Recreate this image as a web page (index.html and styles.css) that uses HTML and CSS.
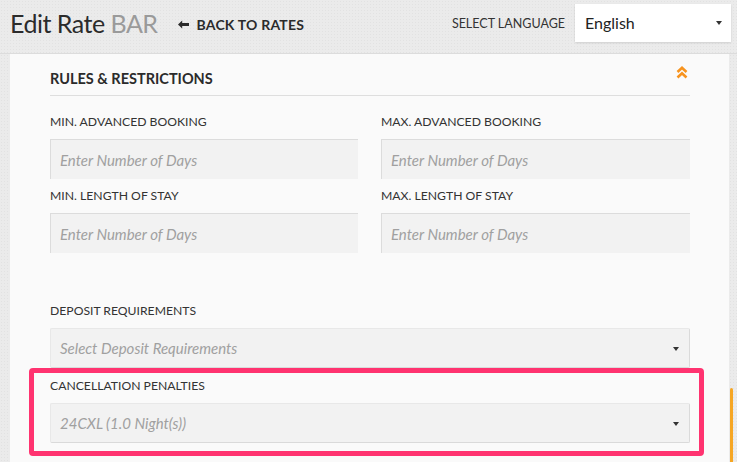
FILE: index.html
```html
<!DOCTYPE html>
<html lang="en">
<head>
<meta charset="utf-8">
<title>Edit Rate BAR</title>
<link rel="stylesheet" href="styles.css">
</head>
<body>
<div class="page">
  <header class="topbar">
    <h1 class="title">Edit Rate <span class="title-sub">BAR</span></h1>
    <a class="back" href="#"><svg class="back-arrow" width="11" height="9" viewBox="0 0 11 9"><path d="M0 4.5 L4.2 0.6 L4.2 3.1 L11 3.1 L11 5.9 L4.2 5.9 L4.2 8.4 Z" fill="#2b2b2b"/></svg>BACK TO RATES</a>
    <div class="lang">
      <span class="lang-label">SELECT LANGUAGE</span>
      <div class="lang-select"><span>English</span><span class="caret"></span></div>
    </div>
  </header>
  <main class="panel">
    <div class="section-head">
      <h2 class="section-title">RULES &amp; RESTRICTIONS</h2>
      <svg class="chev" width="12" height="13" viewBox="0 0 12 13"><path d="M1.5 6 L6 1.8 L10.5 6 M1.5 11.5 L6 7.3 L10.5 11.5" fill="none" stroke="#f7931e" stroke-width="2.6"/></svg>
    </div>
    <div class="grid">
      <div class="field">
        <label class="label">MIN. ADVANCED BOOKING</label>
        <div class="input">Enter Number of Days</div>
      </div>
      <div class="field">
        <label class="label">MAX. ADVANCED BOOKING</label>
        <div class="input">Enter Number of Days</div>
      </div>
      <div class="field">
        <label class="label">MIN. LENGTH OF STAY</label>
        <div class="input">Enter Number of Days</div>
      </div>
      <div class="field">
        <label class="label">MAX. LENGTH OF STAY</label>
        <div class="input">Enter Number of Days</div>
      </div>
    </div>
    <div class="field field-deposit">
      <label class="label">DEPOSIT REQUIREMENTS</label>
      <div class="input select">Select Deposit Requirements<span class="caret"></span></div>
    </div>
    <div class="highlight">
      <div class="field">
        <label class="label">CANCELLATION PENALTIES</label>
        <div class="input select">24CXL (1.0 Night(s))<span class="caret"></span></div>
      </div>
    </div>
  </main>
  <div class="scrollbar"></div>
</div>
</body>
</html>
```
FILE: styles.css
```css
* { box-sizing: border-box; }
html, body { margin: 0; padding: 0; }
body {
  width: 737px;
  height: 462px;
  overflow: hidden;
  font-family: Lato, "Open Sans", "Liberation Sans", sans-serif;
  color: #333;
  background-color: #ebebeb;
  background-image: radial-gradient(#e2e2e2 0.6px, transparent 0.8px);
  background-size: 3px 3px;
}
.page { position: relative; height: 462px; }
.topbar {
  height: 54px;
  display: flex;
  align-items: center;
  padding: 0 6px 5px 10px;
  border-bottom: 1px solid #dcdcdc;
}
.title {
  margin: -2px 0 0;
  font-weight: 400;
  font-size: 25px;
  color: #2b2b2b;
  letter-spacing: -0.5px;
}
.title-sub { color: #9a9a9a; }
.back {
  margin-left: 20px;
  font-size: 14px;
  font-weight: 700;
  color: #2b2b2b;
  text-decoration: none;
  margin-top: 1px;
  display: flex;
  align-items: center;
  letter-spacing: 0.2px;
}
.back-arrow { margin-right: 8px; margin-top: 0; }
.lang { margin-left: auto; margin-top: -3px; display: flex; align-items: center; }
.lang-label { font-size: 12.5px; color: #333; margin-right: 10px; margin-top: 2px; }
.lang-select {
  width: 156px;
  height: 38px;
  background: #fff;
  box-shadow: 0 1px 2px rgba(0,0,0,0.12);
  display: flex;
  align-items: center;
  justify-content: space-between;
  padding: 0 9px 0 10px;
  font-size: 16px;
  color: #222;
}
.caret {
  width: 0; height: 0;
  border-left: 3.5px solid transparent;
  border-right: 3.5px solid transparent;
  border-top: 4px solid #333;
}
.panel {
  width: 719px;
  margin-left: 10px;
  background: #fafafa;
  padding: 0 39px 0 40px;
  height: 408px;
}
.section-head {
  display: flex;
  align-items: center;
  justify-content: space-between;
  padding: 15px 0 0;
  height: 42px;
  border-bottom: 1px solid #dedede;
}
.section-title {
  margin: 0;
  font-size: 14.5px;
  font-weight: 700;
  color: #2b2b2b;
  align-self: flex-start;
  padding-top: 1px;
}
.chev { margin-right: 2px; align-self: flex-start; margin-top: -3px; }
.grid {
  display: grid;
  grid-template-columns: 308px 309px;
  column-gap: 23px;
  padding-top: 17px;
  row-gap: 8px;
}
.field { display: flex; flex-direction: column; }
.label {
  font-size: 12.2px;
  color: #333;
  height: 17px;
  line-height: 17px;
  margin-bottom: 9px;
}
.input {
  height: 40px;
  background: #f2f2f2;
  border-top: 1px solid #dcdcdc;
  border-left: 1px solid #dcdcdc;
  font-style: italic;
  font-size: 15px;
  color: #a0a0a0;
  display: flex;
  align-items: center;
  padding-left: 9px;
}
.select {
  justify-content: space-between;
  padding-right: 10px;
  border: 1px solid #e8e8e8;
  border-right-color: #dadada;
  border-bottom-color: #dadada;
  border-radius: 2px;
}
.select .caret { margin-top: 1px; }
.field-deposit { margin-top: 49px; }
.highlight {
  margin: 0 -14px 0 -21px;
  border: 5px solid #ff3370;
  border-radius: 4px;
  padding: 4px 9px 8px 16px;
}
.highlight .label { margin-bottom: 9px; }
.scrollbar {
  position: absolute;
  right: 4px;
  top: 388px;
  width: 3px;
  height: 80px;
  background: #f6a623;
  border-radius: 2px;
}
```
